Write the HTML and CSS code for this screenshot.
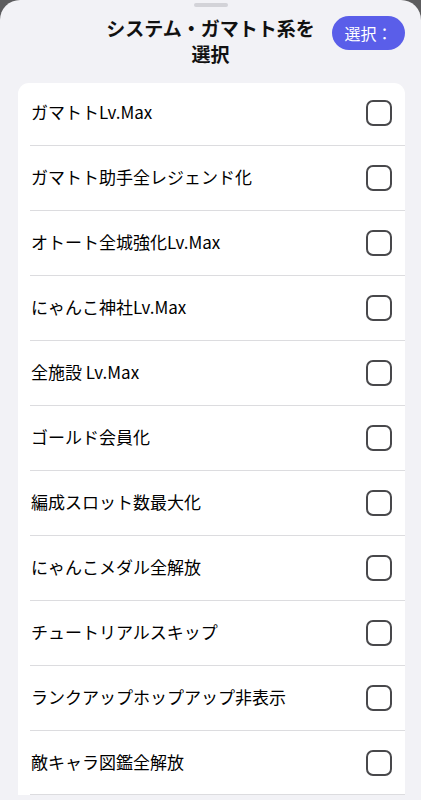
FILE: index.html
```html
<!DOCTYPE html>
<html lang="ja">
<head>
<meta charset="utf-8">
<link rel="stylesheet" href="styles.css">
</head>
<body>
<div class="sheet">
  <div class="handle"></div>
  <header class="header">
    <div class="spacer"></div>
    <h1 class="title">システム・ガマトト系を選択</h1>
    <button class="select-btn">選択：</button>
  </header>
  <ul class="list">
    <li class="row"><span class="label">ガマトトLv.Max</span><span class="check"></span></li>
    <li class="row"><span class="label">ガマトト助手全レジェンド化</span><span class="check"></span></li>
    <li class="row"><span class="label">オトート全城強化Lv.Max</span><span class="check"></span></li>
    <li class="row"><span class="label">にゃんこ神社Lv.Max</span><span class="check"></span></li>
    <li class="row"><span class="label">全施設 Lv.Max</span><span class="check"></span></li>
    <li class="row"><span class="label">ゴールド会員化</span><span class="check"></span></li>
    <li class="row"><span class="label">編成スロット数最大化</span><span class="check"></span></li>
    <li class="row"><span class="label">にゃんこメダル全解放</span><span class="check"></span></li>
    <li class="row"><span class="label">チュートリアルスキップ</span><span class="check"></span></li>
    <li class="row"><span class="label">ランクアップホップアップ非表示</span><span class="check"></span></li>
    <li class="row"><span class="label">敵キャラ図鑑全解放</span><span class="check"></span></li>
  </ul>
</div>
</body>
</html>
```
FILE: styles.css
```css
* { box-sizing: border-box; }
html, body {
  margin: 0;
  padding: 0;
  height: 100%;
  background: #5c5c5e;
  overflow: hidden;
}
body {
  font-family: "Noto Sans CJK JP", "Noto Sans", sans-serif;
  color: #111;
}
.sheet {
  background: #f2f2f6;
  border-radius: 20px 20px 0 0;
  min-height: 100%;
  display: flex;
  flex-direction: column;
}
.handle {
  width: 34px;
  height: 4px;
  border-radius: 2px;
  background: #d3d3d8;
  margin: 3px auto 0;
}
.header {
  display: grid;
  grid-template-columns: 84px 1fr 84px;
  padding: 0 16px;
  margin-top: 5px;
}
.title {
  margin: 0;
  font-size: 19px;
  font-weight: 700;
  line-height: 26px;
  text-align: center;
  padding-top: 3px;
}
.select-btn {
  align-self: start;
  justify-self: end;
  margin-top: 4px;
  width: 73px;
  height: 34px;
  border: none;
  border-radius: 17px;
  background: #5a5ee9;
  color: #fff;
  font-family: inherit;
  font-size: 16px;
  font-weight: 400;
  padding: 0;
}
.list {
  list-style: none;
  margin: 16px 16px 0 18px;
  padding: 0;
  background: #fff;
  border-radius: 11px 11px 0 0;
}
.row {
  display: flex;
  align-items: center;
  justify-content: space-between;
  height: 65px;
  padding: 0 13px;
}
.row + .row {
  border-top: 1px solid #dcdcdf;
  margin-left: 12px;
  padding-left: 1px;
}
.row:last-child {
  border-bottom: 1px solid #dcdcdf;
}
.row:first-child {
  height: 62px;
  padding-bottom: 3px;
}
.label {
  font-size: 17px;
  font-weight: 400;
  line-height: 24px;
  padding-bottom: 2px;
  color: #000;
}
.check {
  width: 26px;
  height: 26px;
  border: 2px solid #48484b;
  border-radius: 7px;
  flex: none;
}
```
